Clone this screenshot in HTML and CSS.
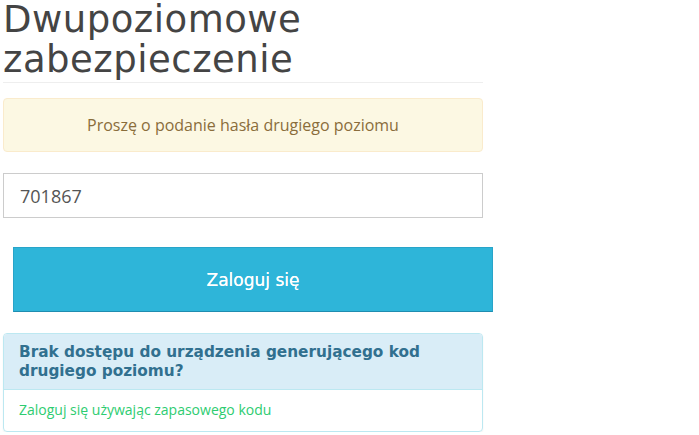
FILE: index.html
```html
<!DOCTYPE html>
<html lang="pl">
<head>
    <meta charset="UTF-8">
    <meta name="viewport" content="width=device-width, initial-scale=1.0">
    <title>Dwupoziomowe zabezpieczenie</title>
    <link rel="stylesheet" href="styles.css">
</head>
<body>
    <main class="twofactor">
        <!-- Naglowek -->
        <div class="page-header">
            <h1>Dwupoziomowe zabezpieczenie</h1>
        </div>

        <div class="alert alert-warning">Proszę o podanie hasła drugiego poziomu</div>

        <form class="code-form">
            <input type="text" class="form-control" name="code" value="701867">
            <button type="submit" class="btn btn-info">Zaloguj się</button>
        </form>

        <!-- Kod zapasowy -->
        <div class="panel panel-info">
            <div class="panel-heading">Brak dostępu do urządzenia generującego kod drugiego poziomu?</div>
            <div class="panel-body">
                <a href="#" class="backup-link">Zaloguj się używając zapasowego kodu</a>
            </div>
        </div>
    </main>
</body>
</html>
```

FILE: styles.css
```css
/* Global Styles */
body {
    margin: 0;
    padding: 0;
    font-family: "Open Sans", "Liberation Sans", sans-serif;
    font-size: 14px;
    color: #555;
    background: #fff;
}

.twofactor {
    width: 480px;
    margin-left: 3px;
}

/* Header */
.page-header {
    border-bottom: 1px solid #eee;
    padding-bottom: 3px;
    margin-bottom: 15px;
}

.page-header h1 {
    margin: 0;
    font-family: "DejaVu Sans", sans-serif;
    font-weight: normal;
    font-size: 37px;
    line-height: 39.6px;
    color: #444;
    letter-spacing: 0.5px;
}

/* Alert */
.alert {
    padding: 15px;
    border: 1px solid #faebcc;
    border-radius: 4px;
    font-size: 16px;
    line-height: 22px;
    text-align: center;
}

.alert-warning {
    background: #fcf8e3;
    color: #8a6d3b;
}

/* Form */
.code-form {
    margin-top: 21px;
}

.form-control {
    display: block;
    width: 100%;
    height: 45px;
    box-sizing: border-box;
    padding: 0 16px;
    border: 1px solid #ccc;
    border-radius: 0;
    font-family: "Open Sans", sans-serif;
    font-size: 18px;
    color: #555;
}

.btn {
    display: block;
    width: 480px;
    height: 65px;
    margin: 29px 0 0 10px;
    box-sizing: border-box;
    border: 1px solid #28a4c9;
    border-bottom-color: #1f8db0;
    border-radius: 0;
    font-family: "DejaVu Sans", sans-serif;
    font-size: 17px;
    color: #fff;
    text-shadow: 0 0 0.4px #fff;
    cursor: pointer;
}

.btn-info {
    background: #2eb5d9;
}

/* Panel */
.panel {
    margin-top: 21px;
    border: 1px solid #bce8f1;
    border-radius: 4px;
    box-shadow: 0 1px 2px rgba(0, 0, 0, 0.06);
    overflow: hidden;
}

.panel-heading {
    background: #d9edf7;
    color: #31708f;
    border-bottom: 1px solid #bce8f1;
    padding: 9px 15px 8px;
    font-family: "DejaVu Sans", sans-serif;
    font-weight: bold;
    font-size: 15.3px;
    line-height: 19px;
}

.panel-body {
    padding: 10px 15px 11px;
    line-height: 20px;
}

.backup-link {
    color: #2ecc71;
    text-decoration: none;
    font-size: 14px;
}
```
